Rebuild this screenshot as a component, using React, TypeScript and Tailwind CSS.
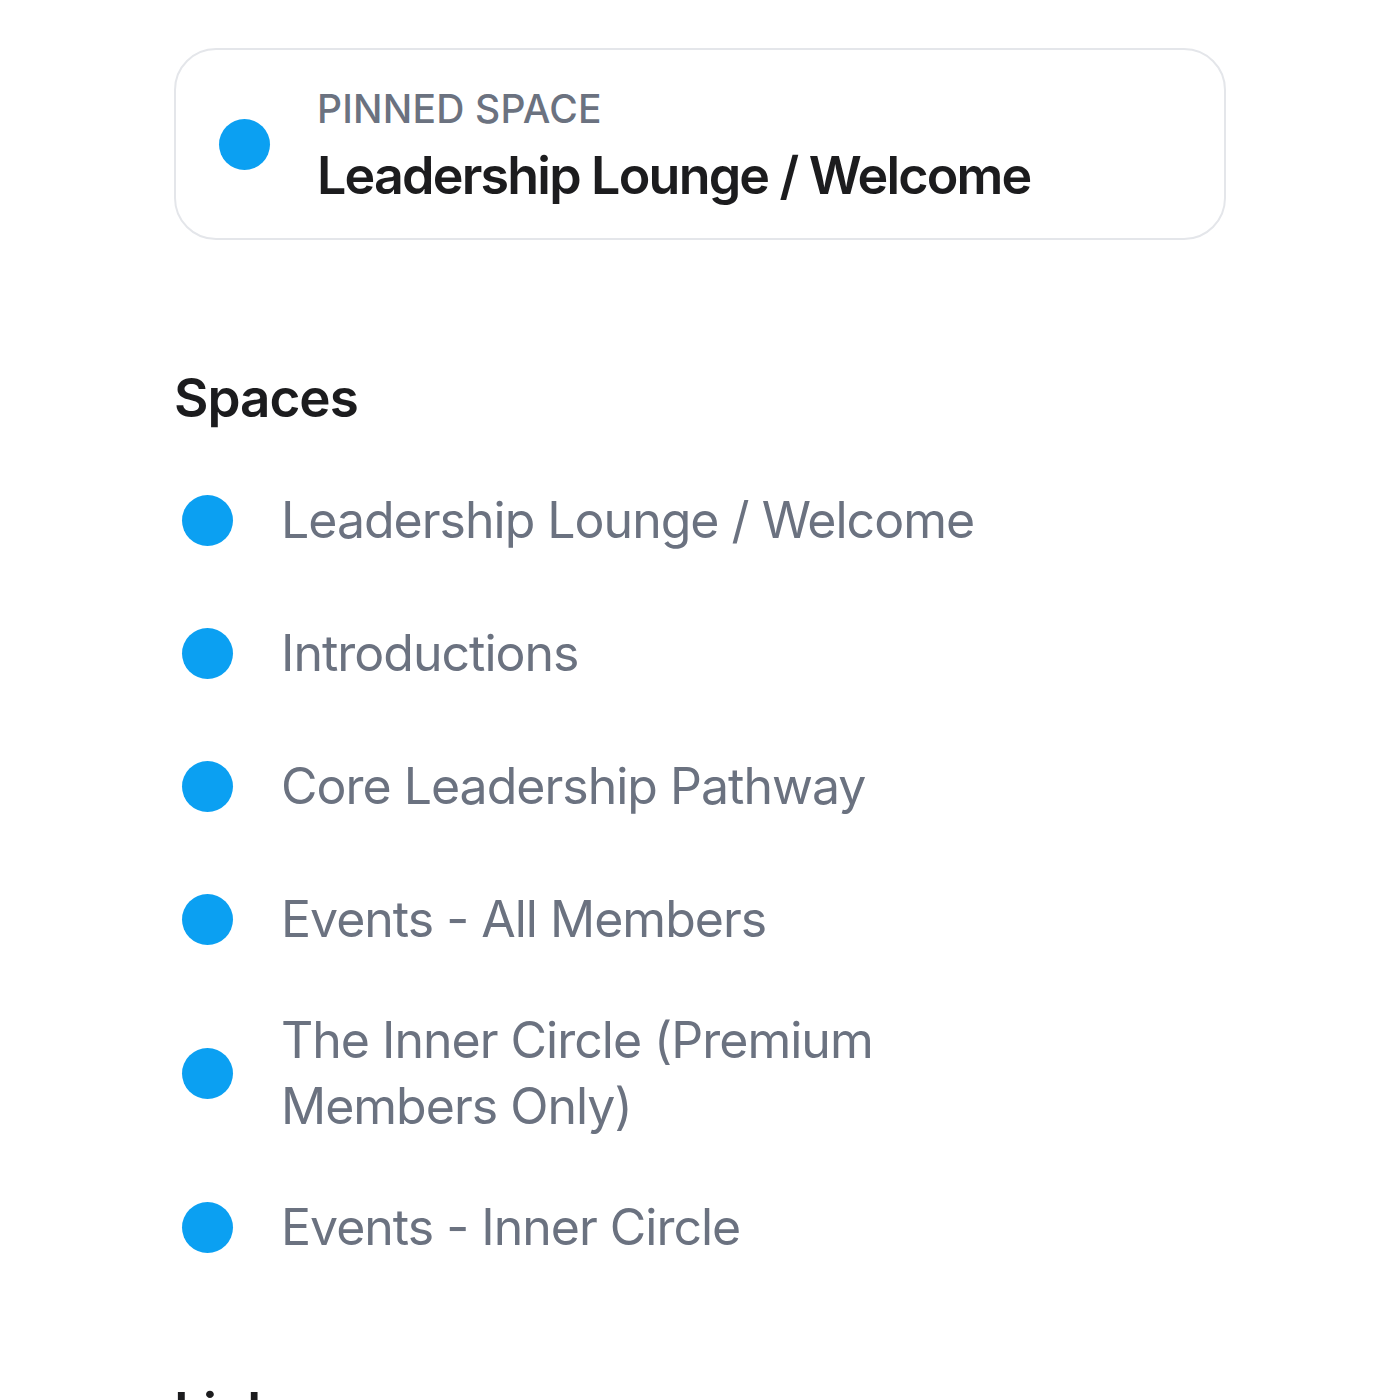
const spaces: string[] = [
  "Leadership Lounge / Welcome",
  "Introductions",
  "Core Leadership Pathway",
  "Events - All Members",
  "The Inner Circle (Premium Members Only)",
  "Events - Inner Circle",
];

function Dot() {
  return <span className="block w-[51px] h-[51px] shrink-0 rounded-full bg-[#0ba0f2]" />;
}

export default function App() {
  return (
    <div
      className="w-[1400px] h-[1400px] overflow-hidden bg-white pl-[174px] pt-[48px]"
      style={{ fontFamily: "Inter, 'Noto Sans', sans-serif" }}
    >
      {/* pinned card */}
      <div className="w-[1052px] h-[192px] rounded-[42px] border-2 border-[#e4e6ea] flex items-center pl-[43px] gap-[47px]">
        <Dot />
        <div className="flex flex-col pt-[6px]">
          <span className="text-[39px] leading-[50px] font-medium tracking-[0.2px] text-[#6b7280] uppercase">
            Pinned Space
          </span>
          <span className="mt-[8px] text-[52px] leading-[68px] font-semibold tracking-[-1.8px] text-[#1c1c1e]">
            Leadership Lounge / Welcome
          </span>
        </div>
      </div>

      {/* spaces */}
      <h2 className="mt-[125px] text-[53px] leading-[67px] font-semibold tracking-[-1px] text-[#1c1c1e]">
        Spaces
      </h2>
      <ul className="mt-[43px] flex flex-col gap-[43px] pl-[8px]">
        {spaces.map((s) => (
          <li key={s} className="flex items-center gap-[48px] min-h-[90px]">
            <Dot />
            <span className="w-[740px] text-[50px] leading-[66px] tracking-[-1px] text-[#6b7280]">
              {s}
            </span>
          </li>
        ))}
      </ul>

      <h2 className="mt-[107px] text-[53px] leading-[67px] font-semibold tracking-[-1px] text-[#1c1c1e]">
        Links
      </h2>
    </div>
  );
}
